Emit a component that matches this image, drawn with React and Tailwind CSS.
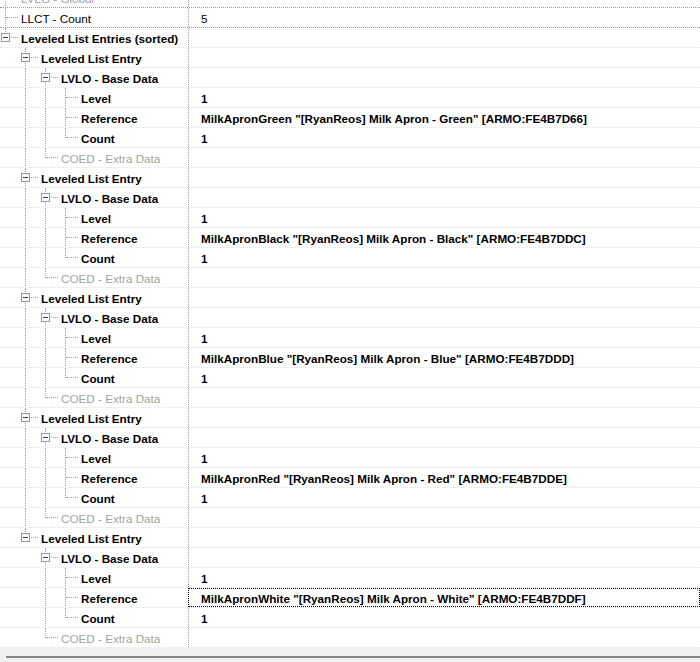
import React from 'react';

const colors = [
  ['Green', 'FE4B7D66'],
  ['Black', 'FE4B7DDC'],
  ['Blue', 'FE4B7DDD'],
  ['Red', 'FE4B7DDE'],
  ['White', 'FE4B7DDF'],
];

function buildRows() {
  const rows = [
    { label: 'LVLG - Global', depth: 0, guides: [], hasNext: true, grey: true, darkBottom: true },
    { label: 'LLCT - Count', depth: 0, guides: [], hasNext: true, value: '5', plainValue: true, darkBottom: true },
    { label: 'Leveled List Entries (sorted)', depth: 0, guides: [], hasNext: false, expander: true, bold: true },
  ];
  colors.forEach(([name, id], i) => {
    const more = i < colors.length - 1;
    rows.push({ label: 'Leveled List Entry', depth: 1, guides: [false], hasNext: more, expander: true, bold: true });
    rows.push({ label: 'LVLO - Base Data', depth: 2, guides: [false, more], hasNext: true, expander: true, bold: true });
    rows.push({ label: 'Level', depth: 3, guides: [false, more, true], hasNext: true, bold: true, value: '1' });
    rows.push({
      label: 'Reference',
      depth: 3,
      guides: [false, more, true],
      hasNext: true,
      bold: true,
      value: `MilkApron${name} "[RyanReos] Milk Apron - ${name}" [ARMO:${id}]`,
      focus: !more,
    });
    rows.push({ label: 'Count', depth: 3, guides: [false, more, true], hasNext: false, bold: true, value: '1' });
    rows.push({ label: 'COED - Extra Data', depth: 2, guides: [false, more], hasNext: false, grey: true });
  });
  return rows;
}

function Guide({ line }) {
  return (
    <div className="relative w-[20px] h-full shrink-0">
      {line && <div className="absolute left-[5px] top-0 -bottom-px border-l border-dotted border-[#a0a0a0]" />}
    </div>
  );
}

function Connector({ hasNext, expander }) {
  return (
    <div className="relative w-[20px] h-full shrink-0">
      <div
        className={
          hasNext
            ? 'absolute left-[5px] top-0 -bottom-px border-l border-dotted border-[#a0a0a0]'
            : 'absolute left-[5px] top-0 h-[10px] border-l border-dotted border-[#a0a0a0]'
        }
      />
      <div className="absolute left-[6px] top-[9px] w-[12px] border-t border-dotted border-[#a0a0a0]" />
      {expander && (
        <div className="absolute left-[1px] top-[5px] w-[9px] h-[9px] border border-[#8e9aa6] bg-white flex items-center justify-center">
          <div className="w-[5px] h-px bg-[#2a3f6b]" />
        </div>
      )}
    </div>
  );
}

function Row({ row }) {
  return (
    <div
      className={
        'flex h-[20px] border-b border-dotted ' +
        (row.darkBottom ? 'border-[#9a9a9a]' : 'border-[#e4e4e4]')
      }
    >
      <div className="w-[189px] shrink-0 flex items-center h-full border-r border-dotted border-[#a0a0a0] overflow-hidden">
        {row.guides.map((g, i) => (
          <Guide key={i} line={g} />
        ))}
        <Connector hasNext={row.hasNext} expander={row.expander} />
        <span
          className={
            'ml-px pt-[2px] whitespace-nowrap ' +
            (row.grey ? 'text-[#a3a3a3]' : 'text-black') +
            (row.bold ? ' font-bold' : '')
          }
        >
          {row.label}
        </span>
      </div>
      <div
        className={
          'flex-1 flex items-center h-full pl-[12px] pt-[2px] whitespace-nowrap text-black ' +
          (row.plainValue ? '' : 'font-bold ') +
          (row.focus ? 'outline outline-1 outline-dotted outline-black -outline-offset-1 -ml-px pl-[13px]' : '')
        }
      >
        {row.value}
      </div>
    </div>
  );
}

export default function App() {
  const rows = buildRows();
  return (
    <div className="w-[700px] h-[662px] overflow-hidden bg-white flex flex-col font-['Liberation_Sans',Arial,sans-serif] text-[11.7px]">
      <div className="-mt-[12px] flex-1 overflow-hidden">
        {rows.map((row, i) => (
          <Row key={i} row={row} />
        ))}
      </div>
      <div className="h-[14px] shrink-0 bg-[#f0f0f0] pt-[8px] pl-[6px]">
        <div className="h-[2px] bg-[#858585]" />
      </div>
    </div>
  );
}
